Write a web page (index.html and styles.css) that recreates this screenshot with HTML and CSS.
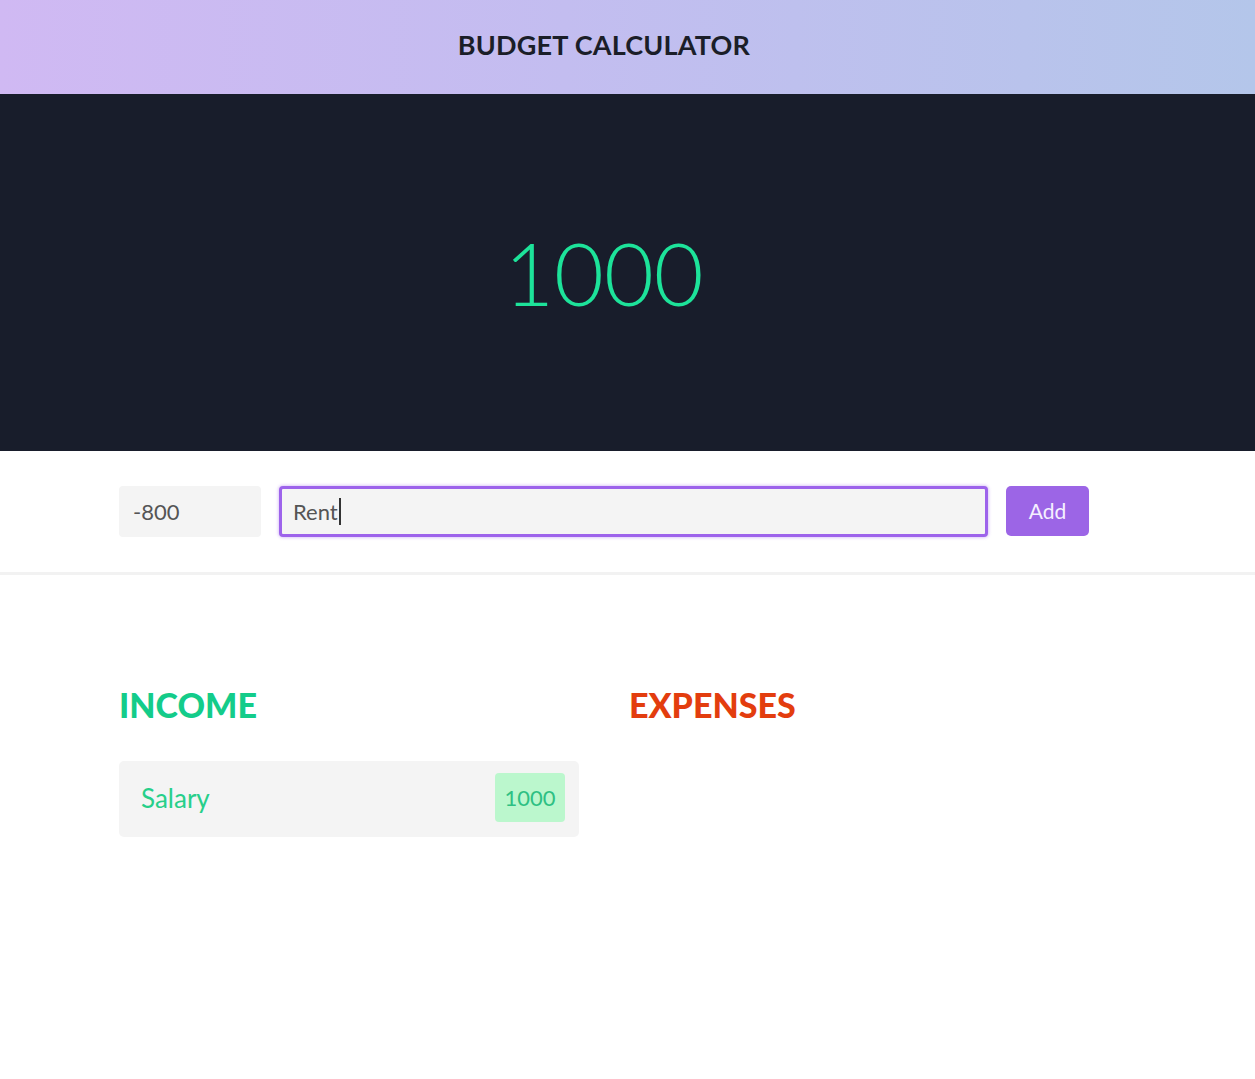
FILE: index.html
```html
<!DOCTYPE html>
<html lang="en">
<head>
<meta charset="utf-8">
<title>Budget Calculator</title>
<link rel="stylesheet" href="styles.css">
</head>
<body>
<header class="topbar">
  <h1 class="title">BUDGET CALCULATOR</h1>
</header>
<section class="balance">
  <div class="balance-value">1000</div>
</section>
<section class="entry">
  <form class="entry-form">
    <input class="field amount" type="text" value="-800">
    <div class="field desc focused">Rent<span class="caret"></span></div>
    <button class="add-btn" type="button">Add</button>
  </form>
</section>
<main class="lists">
  <div class="column">
    <h2 class="col-title income">INCOME</h2>
    <div class="item">
      <span class="item-name">Salary</span>
      <span class="item-value">1000</span>
    </div>
  </div>
  <div class="column">
    <h2 class="col-title expenses">EXPENSES</h2>
  </div>
</main>
</body>
</html>
```
FILE: styles.css
```css
* { box-sizing: border-box; }
html, body { margin: 0; padding: 0; background: #ffffff; }
body { font-family: Lato, "Open Sans", sans-serif; color: #222; }

.topbar {
  height: 94px;
  background: linear-gradient(90deg, #d0b9f3 0%, #c3bdf0 45%, #b4c6ea 100%);
  display: flex;
  align-items: center;
  justify-content: center;
  padding: 0 47px 6px 0;
}
.title {
  margin: 0;
  font-size: 27px;
  font-weight: 700;
  color: #1b1e28;
  letter-spacing: 0.2px;
}

.balance {
  height: 357px;
  background: #181d2b;
  display: flex;
  align-items: center;
  justify-content: center;
  padding-right: 47px;
}
.balance-value {
  font-size: 86px;
  font-weight: 300;
  color: #1de39a;
  line-height: 1;
}

.entry {
  padding: 35px 0 35px 119px;
  border-bottom: 3px solid #f2f2f2;
}
.entry-form {
  display: flex;
  gap: 18px;
  width: 970px;
  margin: 0;
}
.field {
  height: 51px;
  background: #f4f4f4;
  border: none;
  border-radius: 4px;
  font-family: Lato, "Open Sans", sans-serif;
  font-size: 22px;
  color: #555;
  padding: 0 14px;
  outline: none;
  display: flex;
  align-items: center;
}
.amount { width: 142px; }
.desc {
  flex: 1;
  border: 3px solid #9d63eb;
  box-shadow: 0 0 3px 1px rgba(157, 99, 235, 0.35);
  padding-left: 11px;
}
.caret {
  display: inline-block;
  width: 2px;
  height: 27px;
  background: #333;
  margin-left: 1px;
}
.add-btn {
  width: 83px;
  height: 50px;
  border: none;
  border-radius: 5px;
  background: #9c65e6;
  color: #f5f0ff;
  font-family: Lato, "Open Sans", sans-serif;
  font-size: 21px;
  padding-bottom: 2px;
  cursor: pointer;
}

.lists {
  display: grid;
  grid-template-columns: 460px 460px;
  gap: 50px;
  padding: 108px 0 0 119px;
}
.col-title {
  margin: 0 0 34px;
  font-size: 34px;
  font-weight: 900;
  line-height: 44px;
}
.income { color: #14cc8a; }
.expenses { color: #e33d0e; }

.item {
  height: 76px;
  background: #f4f4f4;
  border-radius: 5px;
  display: flex;
  align-items: center;
  justify-content: space-between;
  padding: 0 14px 3px 22px;
}
.item-name {
  font-size: 26px;
  color: #27cf8a;
}
.item-value {
  width: 70px;
  height: 49px;
  background: #bbf7cd;
  border-radius: 4px;
  display: flex;
  align-items: center;
  justify-content: center;
  font-size: 22px;
  color: #2ec083;
}
```
